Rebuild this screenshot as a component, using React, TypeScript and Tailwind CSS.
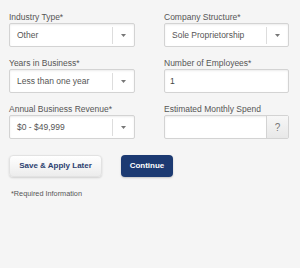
import React from 'react';

const font = { fontFamily: '"Liberation Sans", Arial, sans-serif' };

const Label = ({ children }: { children: React.ReactNode }) => (
  <div className="h-[12px] text-[8.5px] leading-[12px] text-[#555]">{children}</div>
);

const Select = ({ value }: { value: string }) => (
  <div className="flex h-[24px] items-center rounded-[2px] border border-[#d3d3d3] bg-white shadow-[inset_0_1px_2px_rgba(0,0,0,0.08)]">
    <span className="flex-1 pl-[7px] text-[8.5px] text-[#555]">{value}</span>
    <span className="h-[17px] w-px bg-[#ddd]" />
    <span className="flex w-[21px] justify-center">
      <svg width="5" height="3" viewBox="0 0 5 3">
        <path d="M0 0h5L2.5 3z" fill="#777" />
      </svg>
    </span>
  </div>
);

const TextInput = ({ value }: { value: string }) => (
  <div className="flex h-[24px] items-center rounded-[2px] border border-[#d3d3d3] bg-white pl-[5px] text-[8.5px] text-[#444] shadow-[inset_0_1px_2px_rgba(0,0,0,0.08)]">
    {value}
  </div>
);

export default function App() {
  return (
    <div className="h-[268px] w-[300px] bg-[#f5f5f5] pl-[9px] pr-[11px] pt-[11px]" style={font}>
      <div className="grid grid-cols-[126px_125px] gap-x-[29px] gap-y-[10px]">
        <div>
          <Label>Industry Type*</Label>
          <Select value="Other" />
        </div>
        <div>
          <Label>Company Structure*</Label>
          <Select value="Sole Proprietorship" />
        </div>
        <div>
          <Label>Years in Business*</Label>
          <Select value="Less than one year" />
        </div>
        <div>
          <Label>Number of Employees*</Label>
          <TextInput value="1" />
        </div>
        <div>
          <Label>Annual Business Revenue*</Label>
          <Select value="$0 - $49,999" />
        </div>
        <div>
          <Label>Estimated Monthly Spend</Label>
          <div className="flex h-[24px] rounded-[2px] border border-[#d3d3d3] bg-white shadow-[inset_0_1px_2px_rgba(0,0,0,0.08)]">
            <div className="flex-1" />
            <div className="flex w-[22px] items-center justify-center border-l border-[#d3d3d3] bg-gradient-to-b from-[#f7f7f7] to-[#e8e8e8] text-[10px] text-[#777]">
              ?
            </div>
          </div>
        </div>
      </div>
      <div className="mt-[16px] flex items-center gap-[19px]">
        <button className="h-[22px] w-[93px] rounded-[4px] border border-[#e2e2e2] bg-gradient-to-b from-white to-[#ececec] text-[8px] font-bold text-[#2c4170] shadow-[0_1px_2px_rgba(0,0,0,0.15)]">
          Save &amp; Apply Later
        </button>
        <button className="h-[22px] w-[52px] rounded-[4px] bg-[#1c3a72] text-[8px] font-bold text-white shadow-[0_1px_2px_rgba(0,0,0,0.2)]">
          Continue
        </button>
      </div>
      <div className="mt-[12px] pl-[2px] text-[7.3px] text-[#555]">*Required Information</div>
    </div>
  );
}
